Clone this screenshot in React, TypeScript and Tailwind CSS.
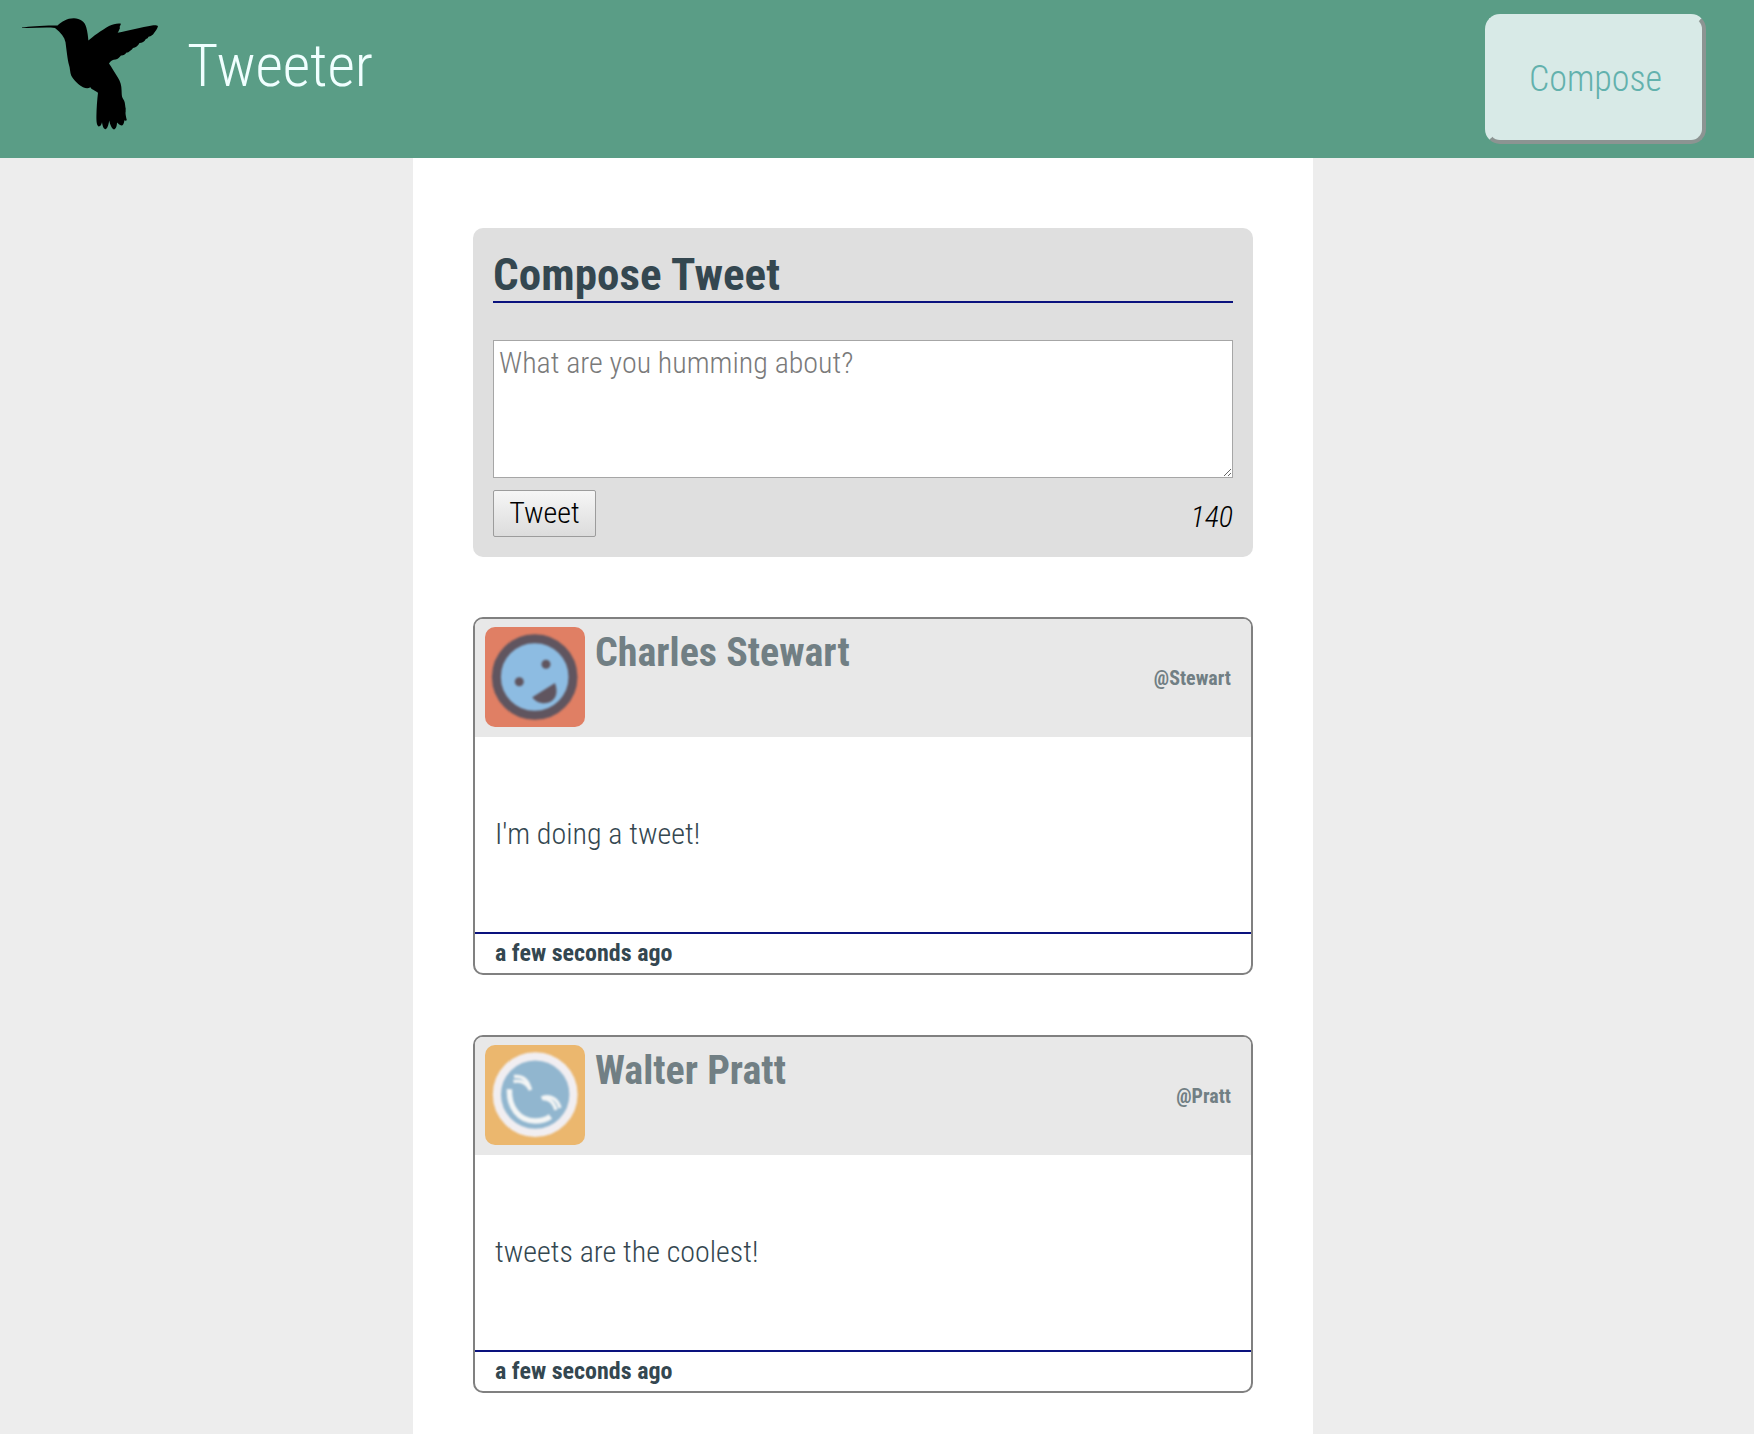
import React from "react";

function Hummingbird() {
  return (
    <svg className="block h-[115px] w-[138px]" viewBox="21 17 138 114" preserveAspectRatio="none" fill="#000">
      <path d="M22 27.4 C30 26.3 42 25.2 57.5 25.4 C62 21.5 67 18.2 74 18.3 C80 18.5 85 21.5 86.3 27.5 C87.6 32 88 36.5 88.4 40.3 C93 36.5 101 30.5 109 26 C113 24.2 117 23 121 23.6 L119.6 26.8 L120 28 L118.2 31.8 L117.6 32.7 C128 30.5 142 27 152 25.4 C154.5 25 157 25 158 26 C157.5 28.5 155.5 31 153 34.4 C151 36 149.5 36.4 148.5 36.6 C147.5 38.5 147 38.7 146 38.5 C144.5 41.5 142 42.5 139.5 42.7 C138 45.5 135.5 47.4 133 47.8 C132 49.5 131 50 130.5 50.2 C128.5 52 127.5 52.4 126.6 52.3 C125 54.3 123 55.5 121 55.2 C119.5 57 118 58.9 115.5 59.2 C113 59.5 110.5 60.5 109 63 C111.5 66.5 115 72.5 118 77.3 C120.5 81.5 121.5 85 121.6 90 C121.8 93 121.5 95.5 123 98 C125 101 125 103 125.4 106.5 C126 108 125.5 109 125.7 110.5 C125.3 112.5 125.6 114 126.8 119.2 C126.3 120 125 119.8 124.4 119.3 C124 122.5 123 124.6 121.5 124.6 C119.5 124.3 118 122.5 117 121.6 C117 125.5 115.5 128.4 114 128.4 C111.5 127.5 110 123.5 109.3 119.6 C108.5 123.5 107.5 128 105.3 128.2 C103 127.5 102.5 124.5 102 121.4 C101.5 123.8 100.5 125.7 98.6 125.5 C96.5 124.5 96.4 120 96.4 115.5 C96.5 107.5 97.2 98.5 98 92 C95.5 90.3 93 88.8 91.6 88.3 C91 87.4 90.5 86.8 90.3 86.6 C88.5 88 86 87.9 83 86.6 C77.5 84 73.5 79 71.3 75.3 C70 72 70 67 69 64.5 C67.5 59 66.6 50 65.5 42 C64.5 37 61 32.5 55 27.8 C44 26.9 33 28.3 22 27.8 Z" />
    </svg>
  );
}

function HappyFace() {
  return (
    <svg className="block size-[100px]" viewBox="0 0 100 100">
      <rect width="100" height="100" fill="#e07f64" />
      <g className="blur-[0.9px]">
        <circle cx="49.7" cy="50" r="38.3" fill="#8dbce2" stroke="#60555f" strokeWidth="9" />
        <circle cx="61" cy="37.3" r="4.5" fill="#60555f" />
        <circle cx="34.3" cy="54.7" r="4.5" fill="#60555f" />
        <path d="M47.3 70.2 L70 56 C72.5 63 72.3 70.3 66.5 74.2 C60.5 77.8 51.5 76.5 47.3 70.2 Z" fill="#60555f" />
      </g>
    </svg>
  );
}

function WinkingFace() {
  return (
    <svg className="block size-[100px]" viewBox="0 0 100 100">
      <rect width="100" height="100" fill="#ebb76e" />
      <g className="blur-[0.9px]">
        <circle cx="50.2" cy="49.6" r="38.3" fill="#91b6cf" stroke="#f1eef1" strokeWidth="8.2" />
        <g fill="none" stroke="#f3f5f5">
          <path d="M24.5 44.2 C23.5 62 34 76 50 76 C56 76 61.5 74.5 65.5 71.5" strokeWidth="5.4" />
          <path d="M29 31.5 C37 30.5 43 34.5 45.5 45" strokeWidth="3.4" />
          <path d="M28.5 36.5 C36 35 41.5 37.5 45.5 45" strokeWidth="3.4" />
          <path d="M56.5 53 C65 49.5 72.5 53.5 75 63" strokeWidth="3.4" />
          <path d="M57 53.5 C64 53 68.5 56 71 65" strokeWidth="3.4" />
        </g>
      </g>
    </svg>
  );
}

type TweetData = { name: string; handle: string; text: string; age: string; avatar: React.ReactNode };

const tweets: TweetData[] = [
  { name: "Charles Stewart", handle: "@Stewart", text: "I'm doing a tweet!", age: "a few seconds ago", avatar: <HappyFace /> },
  { name: "Walter Pratt", handle: "@Pratt", text: "tweets are the coolest!", age: "a few seconds ago", avatar: <WinkingFace /> },
];

function Tweet({ name, handle, text, age, avatar }: TweetData) {
  return (
    <article className="mt-[60px] flex h-[358px] flex-col overflow-hidden rounded-[10px] border-2 border-[#808080] bg-white">
      <header className="flex h-[118px] shrink-0 bg-[#e8e8e8] pt-2 pr-5 pl-2.5 font-bold text-[#717f84]">
        <div className="size-[100px] shrink-0 overflow-hidden rounded-[10px]">{avatar}</div>
        <h3 className="ml-2.5 text-[40px] leading-[52px]">{name}</h3>
        <span className="ml-auto pt-[39px] text-[20px] leading-[24px]">{handle}</span>
      </header>
      <p className="flex h-[195px] shrink-0 items-center pb-0.5 pl-5 text-[30px] leading-[36px] font-light">{text}</p>
      <footer className="flex grow items-center border-t-2 border-[#0a127e] pb-0.5 pl-5 text-[24px] leading-[36px] font-bold">
        {age}
      </footer>
    </article>
  );
}

export default function App() {
  return (
    <div className="h-[1434px] overflow-hidden bg-[#ededed] font-['Roboto_Condensed',Roboto,sans-serif] [font-stretch:75%]">
      <header className="flex h-[158px] bg-[#5a9d86]">
        <div className="pt-[17px] pl-[21px]">
          <Hummingbird />
        </div>
        <h1 className="ml-[28px] pt-[31px] text-[60px] leading-[70px] font-light tracking-[-0.15px] text-[#f0ffff]">Tweeter</h1>
        <button className="mt-[14px] mr-[48px] ml-auto h-[130px] w-[221px] rounded-[15px] border-4 border-t-[#d8eae7] border-r-[#8c9492] border-b-[#8c9492] border-l-[#d8eae7] bg-[#d8eae7] text-[36px] font-light text-[#62b1ad]">
          Compose
        </button>
      </header>
      <main className="ml-[413px] h-[1276px] w-[900px] bg-white px-[60px] pt-[70px] text-[#344750]">
        <section className="h-[329px] rounded-[10px] bg-[#dfdfdf] px-5 pt-5">
          <h2 className="h-[55px] border-b-2 border-[#0a127e] text-[45px] leading-[53px] font-bold tracking-[0.1px]">Compose Tweet</h2>
          <textarea
            placeholder="What are you humming about?"
            className="mt-[37px] block h-[138px] w-full resize border border-[#a6a6a6] bg-white px-[5px] py-1 text-[30px] leading-[35px] font-light outline-none placeholder:text-[#7a7a7a]"
          />
          <div className="mt-3 flex justify-between text-[30px] font-light text-black">
            <button className="h-[47px] w-[103px] rounded-[2px] border border-[#9c9c9c] bg-linear-to-b from-[#f6f6f6] to-[#dcdcdc] pb-0.5 leading-[44px]">
              Tweet
            </button>
            <span className="pt-[9px] leading-[36px] italic">140</span>
          </div>
        </section>
        {tweets.map((t) => (
          <Tweet key={t.handle} {...t} />
        ))}
      </main>
    </div>
  );
}
